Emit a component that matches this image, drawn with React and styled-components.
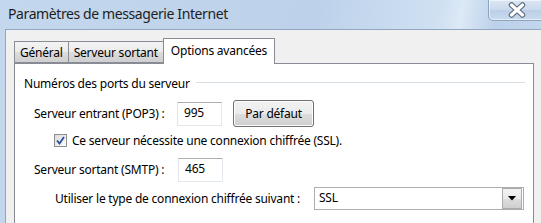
import React from "react";
import styled, { createGlobalStyle } from "styled-components";

const GlobalStyle = createGlobalStyle`
  html, body {
    margin: 0;
    padding: 0;
    background: #c5d9ee;
  }
  body {
    font-family: "Noto Sans", "DejaVu Sans", sans-serif;
    font-size: 12px;
    letter-spacing: -0.22px;
    color: #000;
  }
  * {
    box-sizing: border-box;
  }
`;

const Window = styled.div`
  width: 541px;
  height: 223px;
  overflow: hidden;
  display: flex;
  flex-direction: column;
  background: linear-gradient(
    100deg,
    #c3d7ed 0%,
    #bdd2ea 55%,
    #cfe0f2 76%,
    #dce9f6 80%,
    #bcd1ea 86%,
    #c6daef 100%
  );
`;

const TitleBar = styled.div`
  height: 29px;
  flex: none;
  display: flex;
  align-items: flex-start;
  padding-left: 8px;
`;

const Title = styled.div`
  font-size: 14px;
  line-height: 15px;
  margin-top: 6px;
  color: #1e1e1e;
  letter-spacing: -0.4px;
`;

const CloseButton = styled.div`
  margin-left: auto;
  margin-right: -8px;
  width: 61px;
  height: 21px;
  border: 1px solid #8fa3bc;
  border-top: none;
  border-radius: 0 0 0 5px;
  background: linear-gradient(#dae6f3, #c9daed 50%, #bccfe6 51%, #c8daee);
  box-shadow: inset 0 0 0 1px rgba(255, 255, 255, 0.55);
  display: flex;
  align-items: center;
  padding-left: 19px;
`;

const Frame = styled.div`
  flex: 1;
  margin-left: 5px;
  border-left: 1px solid #93a6bf;
  border-top: 1px solid #93a6bf;
  background: #f0f0f0;
  padding: 8px 0 0 8px;
`;

const TabStrip = styled.div`
  display: flex;
  align-items: flex-end;
  height: 25px;
`;

const Tab = styled.div`
  position: relative;
  z-index: ${(p) => (p.$active ? 2 : 1)};
  height: ${(p) => (p.$active ? "26px" : "22px")};
  align-self: ${(p) => (p.$active ? "flex-start" : "flex-end")};
  margin-left: ${(p) => (p.$first ? "0" : "-1px")};
  padding: 0 ${(p) => (p.$active ? "7px" : "5px")};
  border: 1px solid #898c95;
  border-bottom: ${(p) => (p.$active ? "none" : "1px solid #898c95")};
  background: ${(p) =>
    p.$active ? "#fff" : "linear-gradient(#f3f3f3, #ebebeb 50%, #dddddd 51%, #cfcfcf)"};
  display: flex;
  align-items: center;
  padding-bottom: ${(p) => (p.$active ? "3px" : "0")};
  white-space: nowrap;
`;

const Panel = styled.div`
  position: relative;
  z-index: 1;
  width: 520px;
  height: 200px;
  background: #fff;
  border: 1px solid #898c95;
  padding-top: 12px;
`;

const GroupHeader = styled.div`
  display: flex;
  align-items: center;
  height: 14px;
  padding-left: 9px;
  padding-right: 8px;
`;

const GroupLine = styled.div`
  flex: 1;
  height: 1px;
  margin-left: 6px;
  margin-top: -1px;
  background: #d5dfe5;
  box-shadow: 0 1px 0 #fff;
`;

const Row = styled.div`
  display: flex;
  align-items: center;
  height: ${(p) => p.$height}px;
  margin-top: ${(p) => p.$gap}px;
  padding-left: ${(p) => p.$indent}px;
`;

const Label = styled.div`
  width: ${(p) => p.$width}px;
  flex: none;
  white-space: nowrap;
`;

const TextBox = styled.div`
  width: 45px;
  height: 24px;
  border: 1px solid #e3e9ef;
  border-top-color: #abadb3;
  border-left-color: #e2e3ea;
  background: #fff;
  display: flex;
  align-items: center;
  padding-left: 6px;
  padding-bottom: 2px;
`;

const Button = styled.div`
  width: 81px;
  height: 27px;
  margin-left: 11px;
  border: 1px solid #707070;
  border-radius: 3px;
  background: linear-gradient(#f2f2f2, #ebebeb 50%, #dddddd 51%, #cfcfcf);
  box-shadow: inset 0 0 0 1px #fcfcfc;
  display: flex;
  align-items: center;
  justify-content: center;
  padding-bottom: 1px;
`;

const CheckBox = styled.div`
  width: 13px;
  height: 13px;
  flex: none;
  border: 1px solid #8f8f8f;
  background: linear-gradient(135deg, #dcdcdc, #fbfbfb);
  display: flex;
  align-items: center;
  justify-content: center;
  margin-right: 5px;
`;

const Select = styled.div`
  width: 210px;
  height: 23px;
  border: 1px solid #abadb3;
  background: #fff;
  display: flex;
  align-items: center;
  padding-left: 4px;
  padding-right: 1px;
`;

const SelectValue = styled.div`
  flex: 1;
  padding-bottom: 2px;
`;

const DropButton = styled.div`
  width: 20px;
  height: 21px;
  border: 1px solid #acacac;
  background: linear-gradient(#f2f2f2, #ebebeb 50%, #dddddd 51%, #cfcfcf);
  display: flex;
  align-items: center;
  justify-content: center;
`;

const CloseGlyph = () => (
  <svg width="18" height="16" viewBox="0 0 18 16">
    <path d="M3.5 3 L14.5 13 M14.5 3 L3.5 13" stroke="#5f6b7b" strokeWidth="5.5" strokeLinecap="round" />
    <path d="M3.5 3 L14.5 13 M14.5 3 L3.5 13" stroke="#fff" strokeWidth="3.2" strokeLinecap="round" />
  </svg>
);

const CheckMark = () => (
  <svg width="9" height="9" viewBox="0 0 9 9">
    <path d="M1 4.5 L3.5 7.5 L8 1" fill="none" stroke="#2b4ea5" strokeWidth="1.8" />
  </svg>
);

const Arrow = () => (
  <svg width="8" height="5" viewBox="0 0 8 5">
    <path d="M0 0 H8 L4 4.5 Z" fill="#000" />
  </svg>
);

const App = () => (
  <>
    <GlobalStyle />
    <Window>
      <TitleBar>
        <Title>Paramètres de messagerie Internet</Title>
        <CloseButton>
          <CloseGlyph />
        </CloseButton>
      </TitleBar>
      <Frame>
        <TabStrip>
          <Tab $first>Général</Tab>
          <Tab>Serveur sortant</Tab>
          <Tab $active>Options avancées</Tab>
        </TabStrip>
        <Panel>
          <GroupHeader>
            Numéros des ports du serveur
            <GroupLine />
          </GroupHeader>
          <Row $height={27} $gap={10} $indent={19}>
            <Label $width={143}>Serveur entrant (POP3) :</Label>
            <TextBox>995</TextBox>
            <Button>Par défaut</Button>
          </Row>
          <Row $height={13} $gap={7} $indent={39}>
            <CheckBox>
              <CheckMark />
            </CheckBox>
            <Label>Ce serveur nécessite une connexion chiffrée (SSL).</Label>
          </Row>
          <Row $height={25} $gap={10} $indent={19}>
            <Label $width={144}>Serveur sortant (SMTP) :</Label>
            <TextBox>465</TextBox>
          </Row>
          <Row $height={23} $gap={5} $indent={40}>
            <Label $width={259}>Utiliser le type de connexion chiffrée suivant :</Label>
            <Select>
              <SelectValue>SSL</SelectValue>
              <DropButton>
                <Arrow />
              </DropButton>
            </Select>
          </Row>
        </Panel>
      </Frame>
    </Window>
  </>
);

export default App;
